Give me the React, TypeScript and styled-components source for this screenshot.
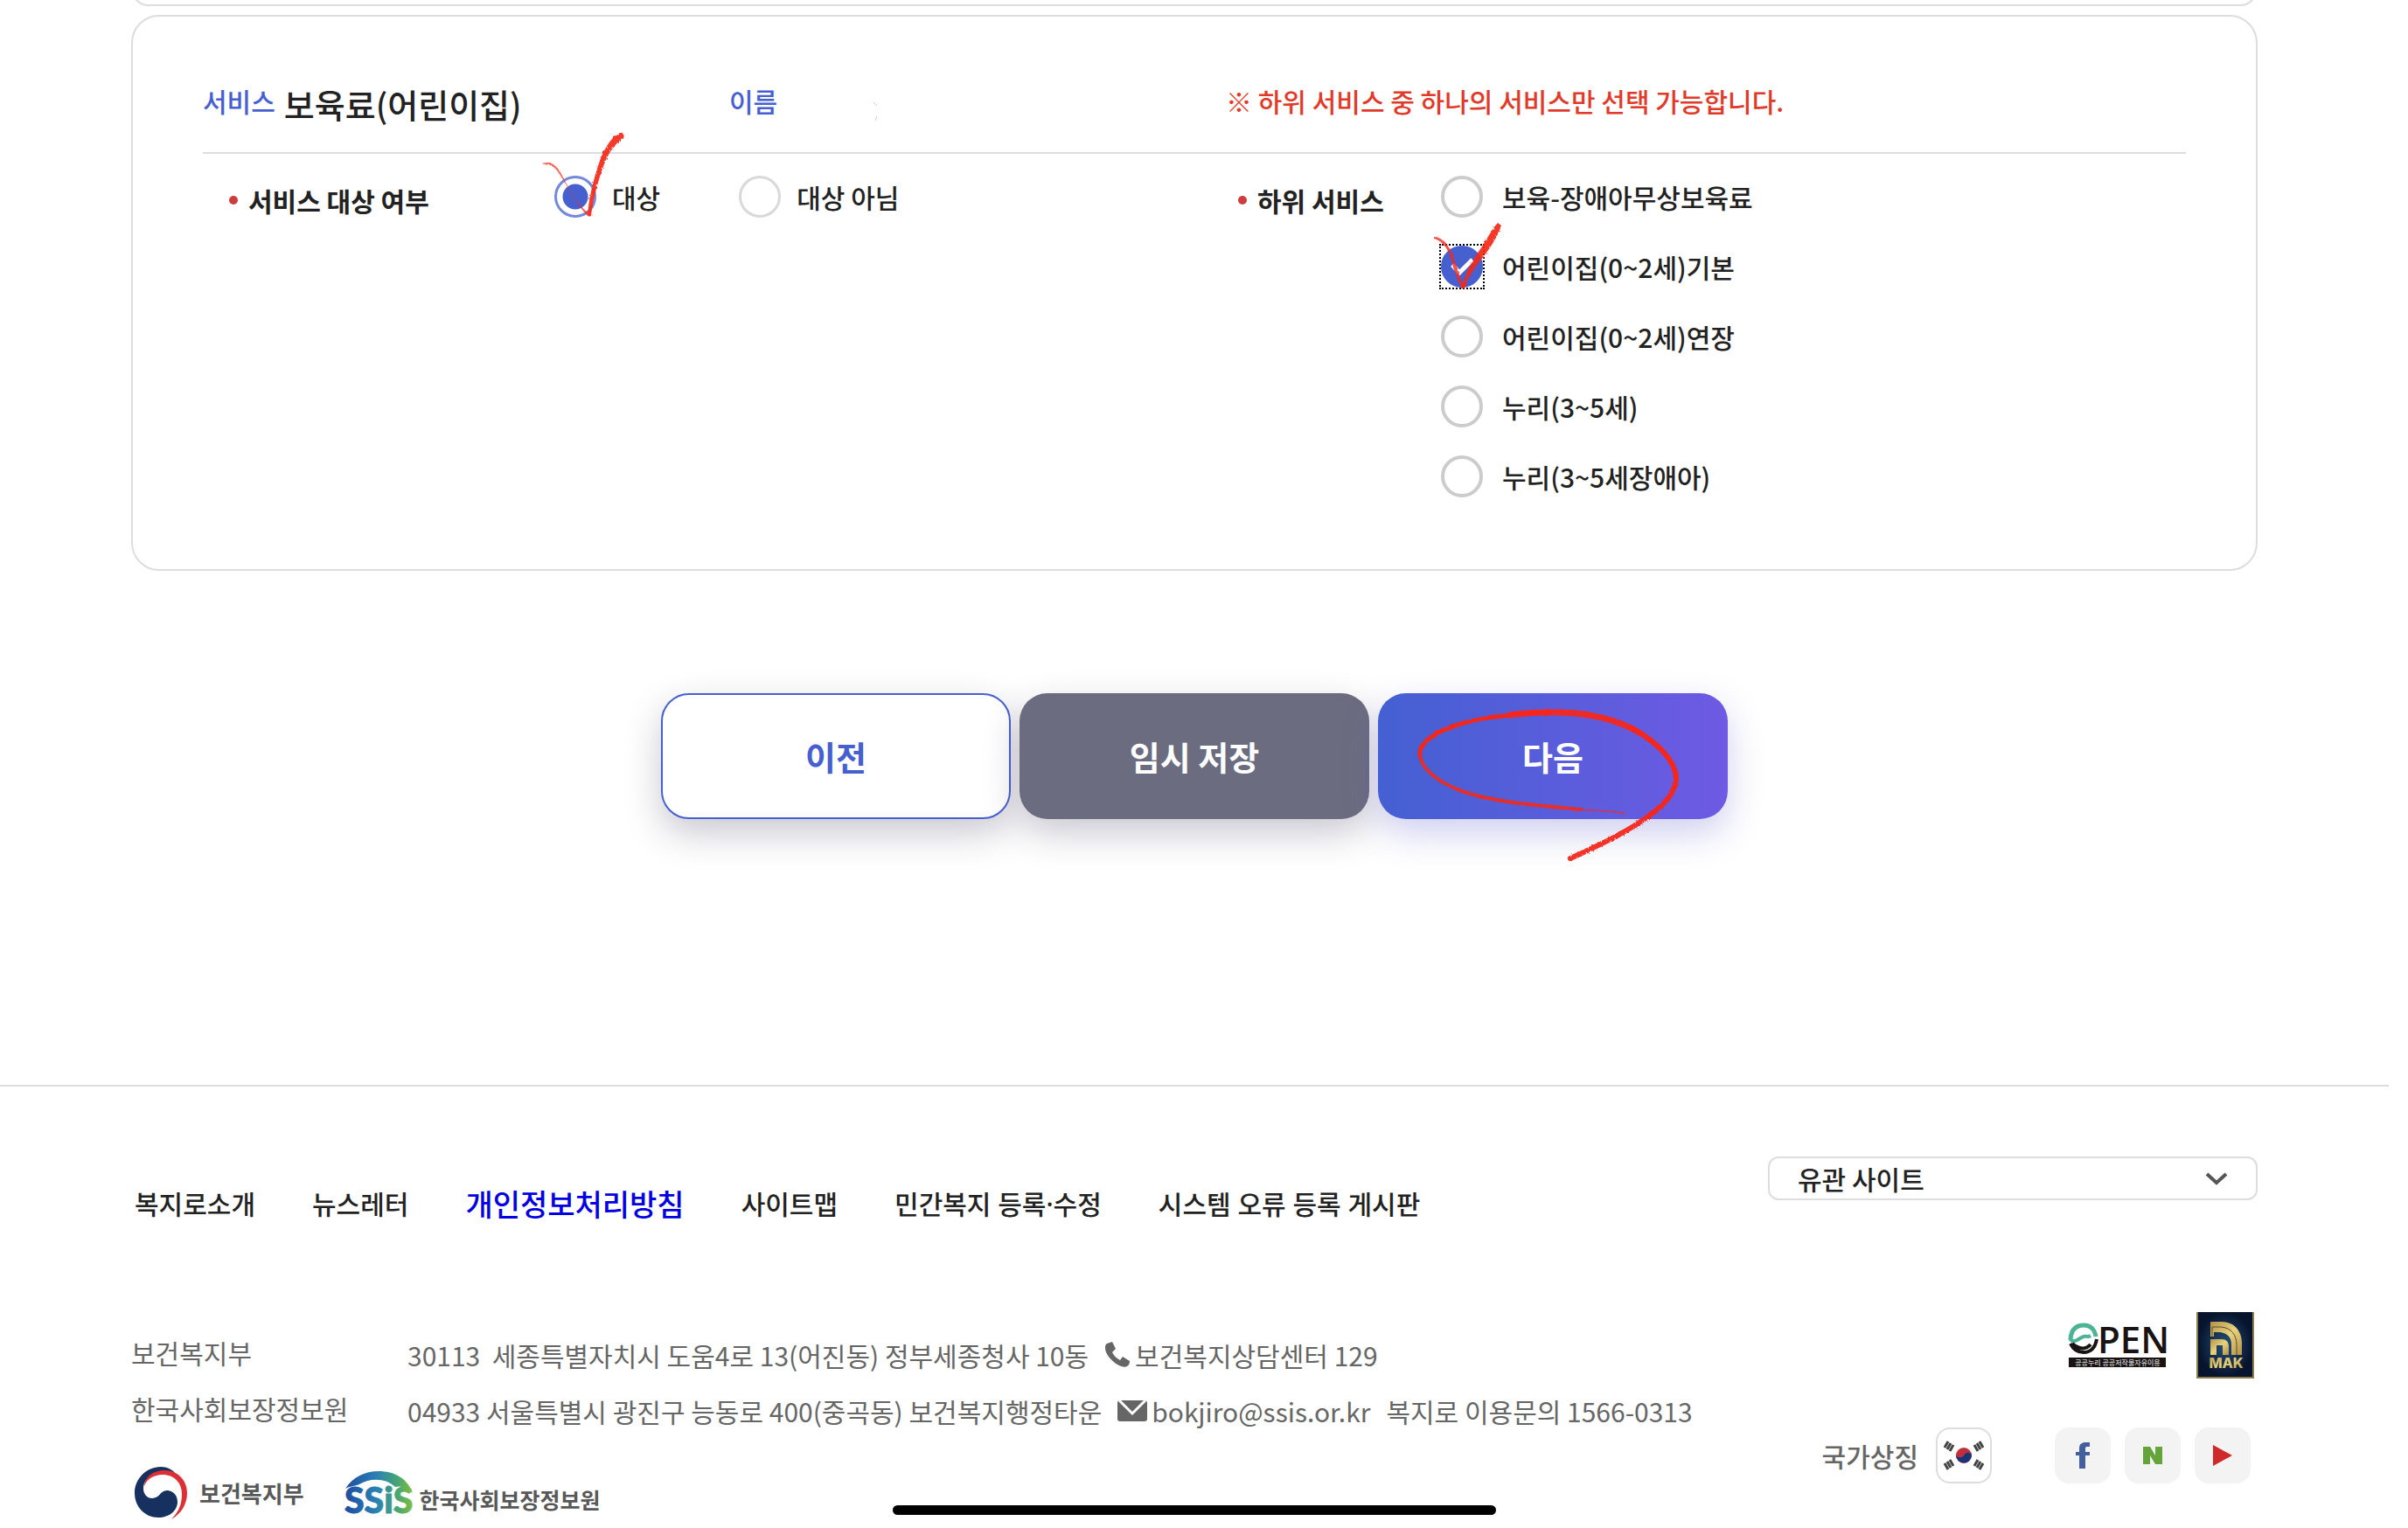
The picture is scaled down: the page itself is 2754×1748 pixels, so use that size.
import React from 'react';
import styled, { createGlobalStyle, css } from 'styled-components';

const color = {
  primary: '#4660d0',
  text: '#222222',
  muted: '#666666',
  line: '#dddddd',
  alert: '#e03a2a',
  pen: '#f5281a',
};

const GlobalStyle = createGlobalStyle`
  *, *::before, *::after { box-sizing: border-box; }
  body {
    margin: 0;
    background: #fff;
    color: ${color.text};
    font-family: "Noto Sans CJK KR", "Noto Sans", sans-serif;
    font-size: 30px;
    font-weight: 500;
    line-height: 48px;
  }
  button, input, select { font: inherit; }
`;

const Page = styled.div`
  margin-right: 22px;
  overflow: hidden;
`;

const Main = styled.main`
  padding: 0 150px;
`;

const PreviousCard = styled.div`
  height: 40px;
  margin-top: -33px;
  border: 2px solid ${color.line};
  border-radius: 32px;
`;

const Card = styled.section`
  margin-top: 10px;
  padding: 72px 80px 82px;
  border: 2px solid ${color.line};
  border-radius: 32px;
`;

const CardHeader = styled.header`
  display: grid;
  grid-template-columns: 602fr 568fr 1098fr;
  align-items: start;
  padding-bottom: 27px;
  border-bottom: 2px solid ${color.line};
`;

const HeaderItem = styled.div`
  display: flex;
  align-items: flex-start;
  gap: 10px;
`;

const HeaderLabel = styled.span`
  color: ${color.primary};
`;

const Title = styled.h2`
  margin: 0;
  font-size: 38px;
  font-weight: 500;
  line-height: 56px;
`;

const Notice = styled.p`
  margin: 0;
  color: ${color.alert};
`;

const Smudge = styled.svg`
  width: 110px;
  height: 48px;
`;

const Fields = styled.div`
  display: grid;
  grid-template-columns: 1fr 1fr;
  gap: 40px;
  padding-top: 25px;
`;

const Field = styled.fieldset<{ $labelWidth: number }>`
  display: grid;
  grid-template-columns: ${(p) => p.$labelWidth}px 1fr;
  min-width: 0;
  margin: 0;
  padding: 0;
  border: 0;
`;

const FieldLabel = styled.div`
  display: flex;
  align-items: center;
  gap: 12px;
  height: 56px;
  padding-left: 30px;
  font-weight: 700;

  &::before {
    content: '';
    width: 10px;
    height: 10px;
    border-radius: 50%;
    background: #cc3d3d;
  }
`;

const Options = styled.div<{ $stacked?: boolean }>`
  display: flex;
  flex-direction: ${(p) => (p.$stacked ? 'column' : 'row')};
  gap: ${(p) => (p.$stacked ? '32px' : '90px')};
`;

const Option = styled.label<{ $gap: number }>`
  position: relative;
  display: flex;
  align-items: center;
  gap: ${(p) => p.$gap}px;
  height: 48px;
`;

const Radio = styled.input<{ $look: 'dot' | 'check' }>`
  appearance: none;
  flex: none;
  width: 48px;
  height: 48px;
  margin: 0;
  border: ${(p) => (p.$look === 'dot' ? 3 : 4)}px solid
    ${(p) => (p.$look === 'dot' ? '#d9d9d9' : '#cccccc')};
  border-radius: 50%;
  background: #fff;

  ${(p) =>
    p.$look === 'dot'
      ? css`
          &:checked {
            border-color: #7488dc;
            background: radial-gradient(circle, ${color.primary} 14px, #fff 15px);
          }
        `
      : css`
          &:checked {
            border-color: ${color.primary};
            background: ${color.primary};
          }
        `}
`;

const FocusFrame = styled.span`
  position: relative;
  display: flex;
  width: 48px;
  height: 48px;
  outline: 2px dotted #000;
`;

const Overlay = styled.svg`
  position: absolute;
  left: 0;
  top: 0;
  overflow: visible;
  pointer-events: none;
`;

const Actions = styled.div`
  display: flex;
  justify-content: center;
  gap: 10px;
  margin-top: 140px;
`;

const ActionButton = styled.button<{ $kind: 'outline' | 'gray' | 'primary' }>`
  position: relative;
  width: 400px;
  height: 144px;
  padding: 0;
  border: 2px solid transparent;
  border-radius: 32px;
  color: #fff;
  font-size: 38px;
  font-weight: 700;
  box-shadow: 0 16px 40px rgba(40, 36, 70, 0.25);

  ${(p) =>
    p.$kind === 'outline' &&
    css`
      border-color: ${color.primary};
      background: #fff;
      color: ${color.primary};
    `}
  ${(p) =>
    p.$kind === 'gray' &&
    css`
      border: 0;
      background: #6c6c80;
    `}
  ${(p) =>
    p.$kind === 'primary' &&
    css`
      border: 0;
      background: linear-gradient(90deg, #4460d2, #6e5ae4);
      box-shadow: 0 16px 40px rgba(80, 80, 200, 0.28);
    `}
`;

const Footer = styled.footer`
  margin-top: 304px;
  padding: 80px 150px 10px;
  border-top: 2px solid ${color.line};
`;

const FooterTop = styled.div`
  display: flex;
  justify-content: space-between;
  align-items: flex-start;
`;

const FooterNav = styled.nav`
  display: flex;
  align-items: center;
  gap: 65px;
  padding: 31px 0 0 4px;
`;

const FooterLink = styled.a<{ $strong?: boolean }>`
  color: ${(p) => (p.$strong ? '#0000e0' : color.text)};
  font-family: "Noto Sans", "Noto Sans CJK KR", sans-serif;
  font-size: ${(p) => (p.$strong ? 34 : 30)}px;
  text-decoration: none;
`;

const SelectBox = styled.div`
  position: relative;
  width: 560px;
`;

const Select = styled.select`
  appearance: none;
  display: block;
  width: 100%;
  height: 50px;
  padding: 0 60px 0 32px;
  border: 2px solid ${color.line};
  border-radius: 12px;
  background: #fff;
  color: ${color.text};
  line-height: 46px;
`;

const Chevron = styled.svg`
  position: absolute;
  right: 34px;
  top: 17px;
  pointer-events: none;
`;

const FooterBottom = styled.div`
  display: flex;
  justify-content: space-between;
  align-items: flex-start;
  margin-top: 99px;
  color: ${color.muted};
`;

const Contact = styled.div`
  padding-top: 17px;
`;

const AddressList = styled.dl`
  display: grid;
  grid-template-columns: 316px auto;
  margin: 0;
  font-weight: 400;
`;

const Agency = styled.dt`
  line-height: 58px;
`;

const Address = styled.dd`
  display: flex;
  align-items: center;
  gap: 18px;
  margin: 0;
  line-height: 64px;
`;

const IconText = styled.span`
  display: flex;
  align-items: center;
  gap: 5px;
`;

const MailLink = styled.a`
  color: inherit;
  text-decoration: none;
`;

const LogoRow = styled.div`
  display: flex;
  align-items: center;
  gap: 46px;
  margin-top: 32px;
  padding-left: 4px;
`;

const Logo = styled.a<{ $small?: boolean }>`
  display: flex;
  align-items: ${(p) => (p.$small ? 'flex-end' : 'center')};
  gap: ${(p) => (p.$small ? 6 : 14)}px;
  color: #585858;
  font-size: ${(p) => (p.$small ? 25 : 26)}px;
  font-weight: 700;
  line-height: ${(p) => (p.$small ? 36 : 48)}px;
  text-decoration: none;

  svg { overflow: visible; }
`;

const Marks = styled.div`
  display: flex;
  flex-direction: column;
  align-items: flex-end;
  gap: 56px;
  padding-right: 4px;
`;

const MarkRow = styled.div`
  display: flex;
  align-items: center;
  gap: 34px;
`;

const SymbolRow = styled.div`
  display: flex;
  align-items: center;
  gap: 72px;
  padding-right: 4px;
`;

const Symbol = styled.div`
  display: flex;
  align-items: center;
  gap: 20px;
`;

const SocialRow = styled.div`
  display: flex;
  gap: 16px;
`;

const Tile = styled.a<{ $outlined?: boolean }>`
  display: grid;
  place-items: center;
  width: 64px;
  height: 64px;
  border: ${(p) => (p.$outlined ? `2px solid ${color.line}` : '0')};
  border-radius: 16px;
  background: ${(p) => (p.$outlined ? '#fff' : '#f3f3f3')};
`;

const HomeIndicator = styled.div`
  position: fixed;
  left: calc(50% - 11px);
  bottom: 15px;
  width: 690px;
  height: 11px;
  border-radius: 6px;
  background: #000;
  transform: translateX(-50%);
`;

const CrayonFilter = () => (
  <svg width="0" height="0" style={{ position: 'absolute' }} aria-hidden="true">
    <filter id="crayon" x="-10%" y="-10%" width="120%" height="120%">
      <feTurbulence type="fractalNoise" baseFrequency="0.4" numOctaves="2" result="n" />
      <feDisplacementMap in="SourceGraphic" in2="n" scale="3" />
    </filter>
  </svg>
);

const TargetMark = () => (
  <Overlay width="48" height="48" aria-hidden="true">
    <g fill={color.pen} filter="url(#crayon)">
      <path d="M-14 -14 C-6 -17 2 -14 8 -2 C16 14 26 34 40 43 L38 46 C26 34 15 12 7 0 C0 -12 -6 -14 -14 -13Z" opacity=".7" />
      <path d="M38 47 C39 30 43 8 53 -20 C60 -36 67 -46 77 -50 L80 -45 C72 -38 64 -30 58 -16 C49 8 44 28 42 46Z" opacity=".92" />
    </g>
  </Overlay>
);

const BasicMark = () => (
  <Overlay width="48" height="48" aria-hidden="true">
    <path d="M13 22 L21 31 L36 16" fill="none" stroke="#fff" strokeWidth="5" />
    <g fill={color.pen} filter="url(#crayon)">
      <path d="M-8 -10 C2 -9 8 -3 14 12 C19 26 22 38 27 48 L24 49 C17 36 13 22 10 10 C5 0 0 -6 -8 -8Z" opacity=".8" />
      <path d="M23 49 C27 34 36 16 45 4 C53 -8 59 -20 65 -26 L69 -23 C65 -10 54 6 46 16 C38 26 31 36 27 49Z" opacity=".92" />
    </g>
  </Overlay>
);

const NextMark = () => (
  <Overlay width="400" height="200" aria-hidden="true">
    <g fill="none" stroke={color.pen} strokeLinecap="round" filter="url(#crayon)">
      <path d="M281 137 C262 134 240 134 218 132" strokeWidth="2" opacity=".6" />
      <path d="M232 133 C190 129 135 126 96 112 C66 101 47 84 48 68" strokeWidth="4" opacity=".9" />
      <path d="M48 70 C47 44 110 23 196 23" strokeWidth="5" />
      <path d="M150 25 C215 17 262 24 297 44" strokeWidth="7" opacity=".95" />
      <path d="M290 40 C320 56 341 78 341 98 C339 116 325 130 309 141" strokeWidth="6" />
      <path d="M314 137 C288 158 250 175 220 189" strokeWidth="6" opacity=".95" />
    </g>
  </Overlay>
);

const PhoneIcon = () => (
  <svg width="30" height="30" viewBox="0 0 30 30" aria-hidden="true">
    <path d="M3 2 L9 0 L13 8 L9 12 C11 16 14 19 18 21 L21 17 L29 22 C29 25 28 27 26 28 C22 30 16 27 12 24 C6 19 1 13 1 7 C1 5 1 3 3 2Z" fill="#666" />
  </svg>
);

const MailIcon = () => (
  <svg width="34" height="26" viewBox="0 0 34 26" aria-hidden="true">
    <rect y="1" width="34" height="24" rx="3" fill="#666" />
    <path d="M2 1 L17 16 L32 1" fill="none" stroke="#fff" strokeWidth="3" />
  </svg>
);

const TaegukLogo = () => (
  <svg width="60" height="60" viewBox="0 0 60 60" aria-hidden="true">
    <path d="M30 0 C13 0 0 14 0 30 C0 46 12 58 27 58 C40 58 49 50 49 40 C49 32 43 27 37 27 C29 27 29 36 20 36 C14 36 10 31 10 25 C10 14 20 6 32 6 C38 6 44 6 48 9 C43 3 37 0 30 0Z" fill="#16305f" />
    <path d="M11 22 C12 10 23 4 34 4 C49 4 60 15 60 30 C60 43 53 54 42 60 C51 51 54 42 54 31 C54 18 45 9 32 9 C22 9 14 14 11 22Z" fill="#dc2f36" />
  </svg>
);

const SsisLogo = () => (
  <svg width="80" height="50" viewBox="0 0 80 50" aria-hidden="true">
    <defs>
      <linearGradient id="ssis" gradientUnits="userSpaceOnUse" x1="0" x2="80" y1="0" y2="0">
        <stop offset="0" stopColor="#1f4ba0" />
        <stop offset=".45" stopColor="#2a80b4" />
        <stop offset=".75" stopColor="#45a577" />
        <stop offset="1" stopColor="#86c232" />
      </linearGradient>
    </defs>
    <path d="M1 20 C9 7 23 0 39 0 C57 0 72 8 78 25 L70 20 C66 17 62 17 58 18 C48 8 30 7 17 15 C12 17 6 17 1 20Z" fill="url(#ssis)" />
    <text x="0" y="48" fill="url(#ssis)" stroke="url(#ssis)" strokeWidth="1" fontFamily="Lato, sans-serif" fontSize="41" fontWeight="900">SSiS</text>
  </svg>
);

const OpenMark = () => (
  <svg width="112" height="52" viewBox="0 0 112 52" overflow="visible" role="img" aria-label="OPEN">
    <path d="M2 19 C3 6 10 3 17 3 C25 3 30 8 31 16" fill="none" stroke="#4db395" strokeWidth="5" />
    <path d="M1 18 C6 26 12 17 17 16 C20 15 22 17 25 15" fill="none" stroke="#4db395" strokeWidth="4" />
    <path d="M2 24 C6 32 11 34 17 34 C24 34 30 30 32 19 M4 24 C12 31 20 31 25 25" fill="none" stroke="#191314" strokeWidth="4" />
    <text x="33" y="35" fill="#191314" fontFamily="'Open Sans', sans-serif" fontSize="42" fontWeight="600">PEN</text>
    <rect y="40" width="111" height="11" fill="#191314" />
    <text x="56" y="49" textAnchor="middle" fill="#ccc" fontSize="8" fontWeight="500">공공누리 공공저작물자유이용</text>
  </svg>
);

const MakMark = () => (
  <svg width="66" height="76" viewBox="0 0 66 76" role="img" aria-label="MAK">
    <defs>
      <radialGradient id="navy">
        <stop offset="0" stopColor="#245079" />
        <stop offset="1" stopColor="#07142d" />
      </radialGradient>
      <linearGradient id="gold" x1="0" x2="1" y1="0" y2="1">
        <stop offset="0" stopColor="#b3924a" />
        <stop offset=".5" stopColor="#e8d27e" />
        <stop offset="1" stopColor="#b3924a" />
      </linearGradient>
    </defs>
    <rect width="66" height="76" fill="#8c7d4c" />
    <rect x="2" width="62" height="74" fill="url(#navy)" />
    <path d="M16 11 H28 C44 11 52 22 52 36 V49 H40 V37 C40 28 35 24 27 23 L20 23 V28 H16Z" fill="url(#gold)" />
    <path d="M18 28 V17 H28 C40 18 46 26 46 38 V49" fill="none" stroke="#5d4c28" strokeWidth="1" />
    <path d="M16 49 V31 H29 C34 31 37 34 37 39 V49 H30 V38 H23 V49Z" fill="url(#gold)" />
    <text x="34" y="64" textAnchor="middle" fill="url(#gold)" fontFamily="Inter, sans-serif" fontSize="16" fontWeight="800">MAK</text>
  </svg>
);

const FlagIcon = () => (
  <svg width="46" height="34" viewBox="0 0 46 34" aria-hidden="true">
    <circle cx="23" cy="17" r="9" fill="#c22f3c" />
    <path d="M14 17 A9 9 0 0 0 32 16 C30 13 25 13 23 17 C21 20 16 20 14 17Z" fill="#1b3478" />
    <g stroke="#444" strokeWidth="3">
      <path d="M1 8 L5 1 M4 10 L8 3 M7 12 L11 5" />
      <path d="M45 8 L41 1 M42 10 L38 3 M39 12 L35 5" />
      <path d="M1 26 L5 33 M4 24 L8 31 M7 22 L11 29" />
      <path d="M45 26 L41 33 M42 24 L38 31 M39 22 L35 29" />
    </g>
  </svg>
);

const FacebookIcon = () => (
  <svg width="16" height="30" viewBox="0 0 16 30" aria-hidden="true">
    <path d="M16 0 V5 H13 C11 5 11 6 11 8 V11 H16 V15 H11 V30 H4 V15 H0 V11 H4 V7 C4 2 7 0 11 0Z" fill="#43609c" />
  </svg>
);

const BlogIcon = () => (
  <svg width="22" height="20" viewBox="0 0 22 20" aria-hidden="true">
    <path d="M0 0 H8 L14 10 V0 H22 V20 H14 L8 10 V20 H0Z" fill="#64a43a" />
  </svg>
);

const PlayIcon = () => (
  <svg width="22" height="24" viewBox="0 0 22 24" aria-hidden="true">
    <path d="M0 0 L22 12 L0 24Z" fill="#cf2a2a" />
  </svg>
);

const subServices = [
  '보육-장애아무상보육료',
  '어린이집(0~2세)기본',
  '어린이집(0~2세)연장',
  '누리(3~5세)',
  '누리(3~5세장애아)',
];

const footerLinks = [
  '복지로소개',
  '뉴스레터',
  '개인정보처리방침',
  '사이트맵',
  '민간복지 등록·수정',
  '시스템 오류 등록 게시판',
];

export default function App() {
  return (
    <>
      <GlobalStyle />
      <CrayonFilter />
      <Page>
        <Main>
          <PreviousCard />
          <Card>
            <CardHeader>
              <HeaderItem>
                <HeaderLabel>서비스</HeaderLabel>
                <Title>보육료(어린이집)</Title>
              </HeaderItem>
              <HeaderItem>
                <HeaderLabel>이름</HeaderLabel>
                <Smudge viewBox="0 0 110 48" aria-hidden="true">
                  <path d="M100 26 L104 30 M104 42 L102 47" stroke="#ccc" strokeWidth="1" />
                </Smudge>
              </HeaderItem>
              <Notice>※ 하위 서비스 중 하나의 서비스만 선택 가능합니다.</Notice>
            </CardHeader>
            <Fields>
              <Field $labelWidth={402} aria-label="서비스 대상 여부">
                <FieldLabel>서비스 대상 여부</FieldLabel>
                <Options>
                  <Option $gap={18}>
                    <Radio $look="dot" type="radio" name="target" defaultChecked />
                    대상
                    <TargetMark />
                  </Option>
                  <Option $gap={18}>
                    <Radio $look="dot" type="radio" name="target" />
                    대상 아님
                  </Option>
                </Options>
              </Field>
              <Field $labelWidth={262} aria-label="하위 서비스">
                <FieldLabel>하위 서비스</FieldLabel>
                <Options $stacked>
                  {subServices.map((name, i) => (
                    <Option key={name} $gap={22}>
                      {i === 1 ? (
                        <FocusFrame>
                          <Radio $look="check" type="radio" name="sub" defaultChecked />
                          <BasicMark />
                        </FocusFrame>
                      ) : (
                        <Radio $look="check" type="radio" name="sub" />
                      )}
                      {name}
                    </Option>
                  ))}
                </Options>
              </Field>
            </Fields>
          </Card>
          <Actions>
            <ActionButton type="button" $kind="outline">이전</ActionButton>
            <ActionButton type="button" $kind="gray">임시 저장</ActionButton>
            <ActionButton type="button" $kind="primary">
              다음
              <NextMark />
            </ActionButton>
          </Actions>
        </Main>
        <Footer>
          <FooterTop>
            <FooterNav>
              {footerLinks.map((name, i) => (
                <FooterLink key={name} href="#" $strong={i === 2}>{name}</FooterLink>
              ))}
            </FooterNav>
            <SelectBox>
              <Select aria-label="유관 사이트">
                <option>유관 사이트</option>
              </Select>
              <Chevron width="26" height="17" viewBox="0 0 26 17" aria-hidden="true">
                <path d="M2 3 L13 13 L24 3" fill="none" stroke="#555" strokeWidth="4" />
              </Chevron>
            </SelectBox>
          </FooterTop>
          <FooterBottom>
            <Contact>
              <AddressList>
                <Agency>보건복지부</Agency>
                <Address>
                  <span>30113&nbsp; 세종특별자치시 도움4로 13(어진동) 정부세종청사 10동</span>
                  <IconText><PhoneIcon />보건복지상담센터 129</IconText>
                </Address>
                <Agency>한국사회보장정보원</Agency>
                <Address>
                  <span>04933 서울특별시 광진구 능동로 400(중곡동) 보건복지행정타운</span>
                  <IconText><MailIcon /><MailLink href="#">bokjiro@ssis.or.kr</MailLink></IconText>
                  <span>복지로 이용문의 1566-0313</span>
                </Address>
              </AddressList>
              <LogoRow>
                <Logo href="#"><TaegukLogo />보건복지부</Logo>
                <Logo href="#" $small><SsisLogo />한국사회보장정보원</Logo>
              </LogoRow>
            </Contact>
            <Marks>
              <MarkRow>
                <OpenMark />
                <MakMark />
              </MarkRow>
              <SymbolRow>
                <Symbol>
                  국가상징
                  <Tile href="#" $outlined aria-label="국가상징"><FlagIcon /></Tile>
                </Symbol>
                <SocialRow>
                  <Tile href="#" aria-label="페이스북"><FacebookIcon /></Tile>
                  <Tile href="#" aria-label="블로그"><BlogIcon /></Tile>
                  <Tile href="#" aria-label="유튜브"><PlayIcon /></Tile>
                </SocialRow>
              </SymbolRow>
            </Marks>
          </FooterBottom>
        </Footer>
      </Page>
      <HomeIndicator />
    </>
  );
}
